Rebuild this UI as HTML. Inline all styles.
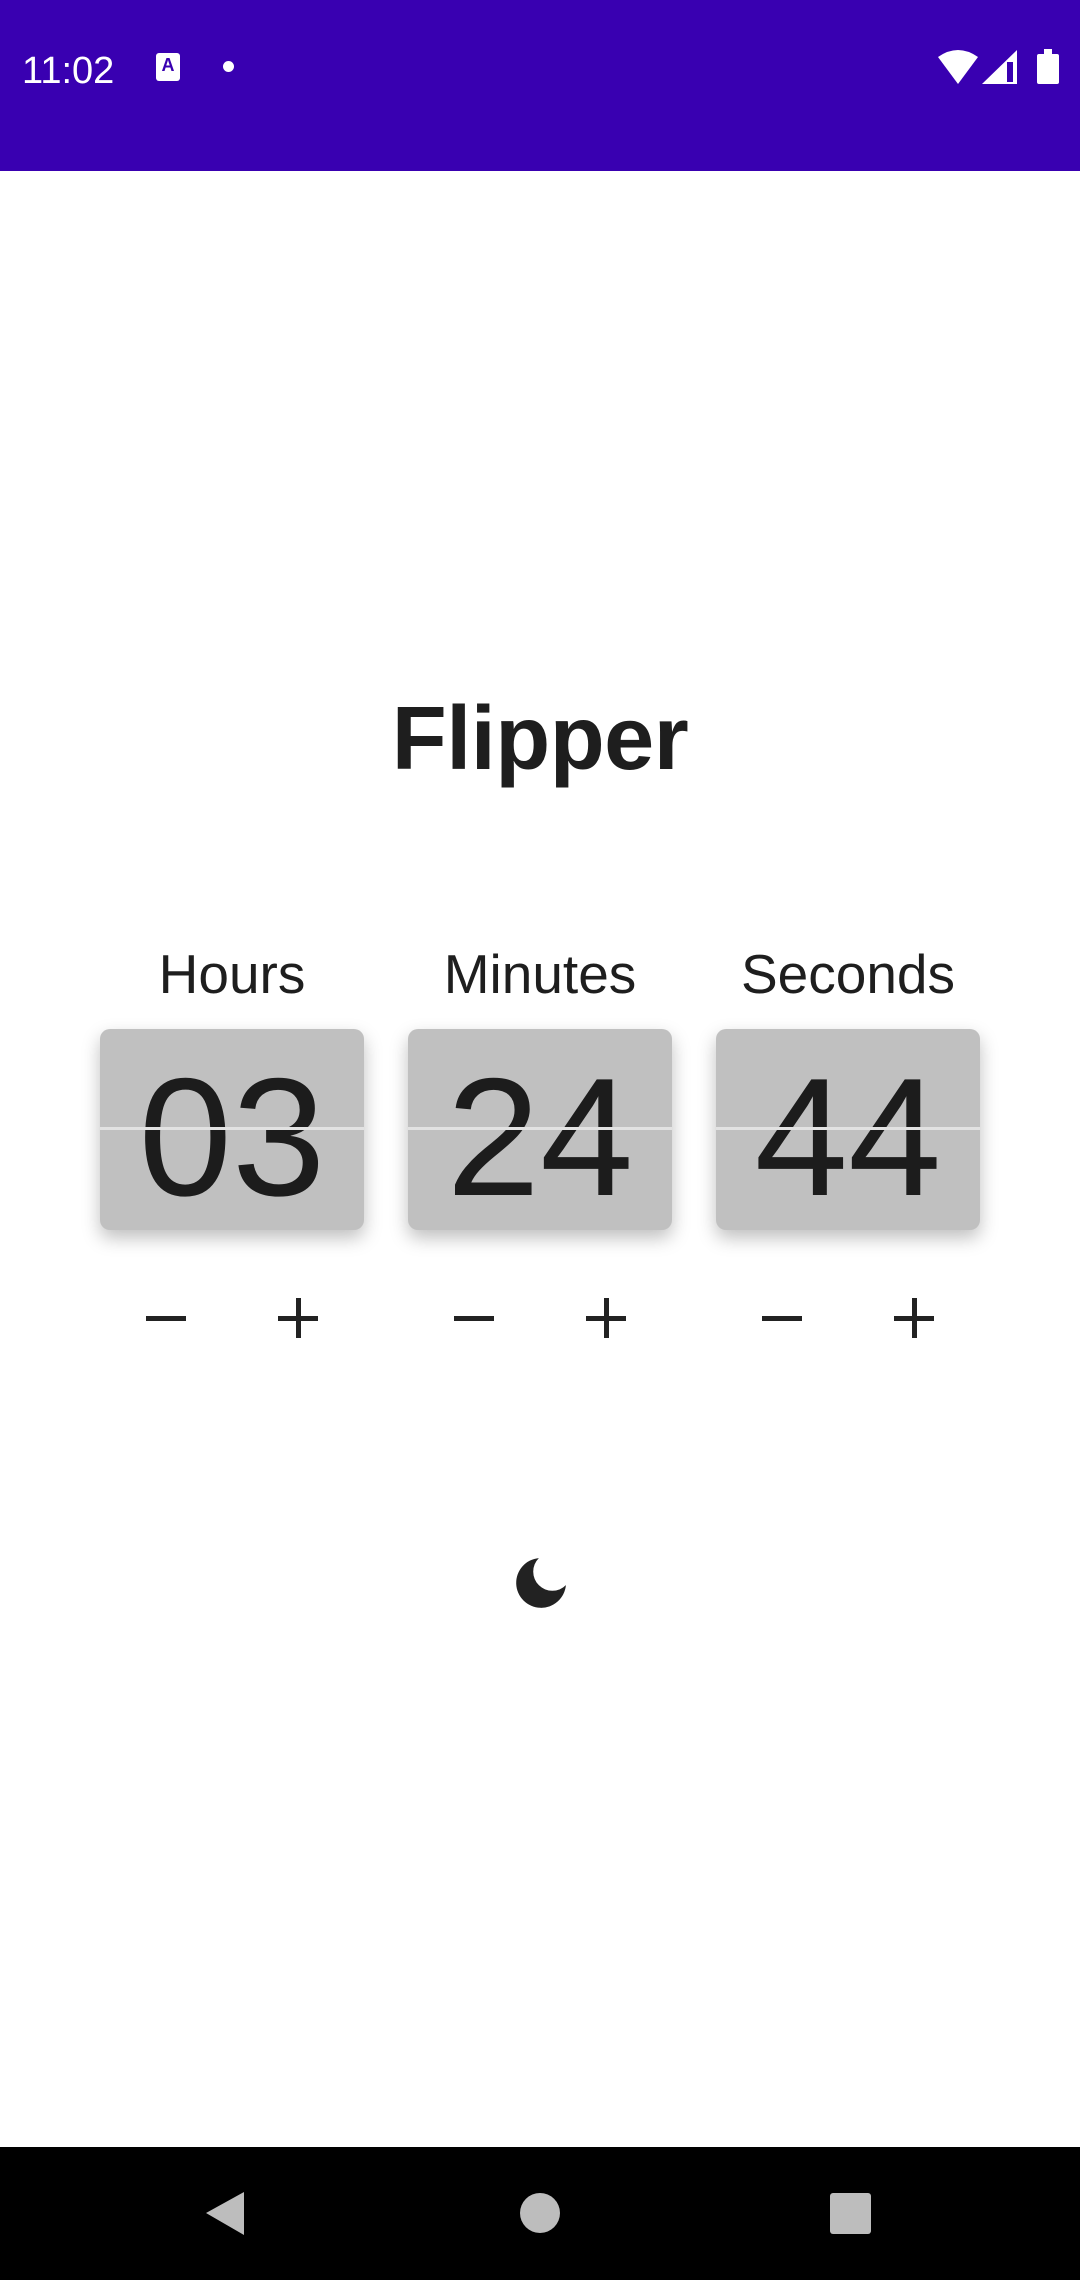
<!DOCTYPE html>
<html><head><meta charset="utf-8"><style>
body{margin:0;width:1080px;height:2280px;background:#fff;position:relative;overflow:hidden;font-family:"Liberation Sans",sans-serif;color:#1e1e1e}
.sb{position:absolute;left:0;top:0;width:1080px;height:171px;background:#3900b1}
.abs{position:absolute}
.title{position:absolute;left:0;width:1080px;text-align:center;top:688px;font-size:90px;font-weight:bold;letter-spacing:-0.5px}
.lbl{position:absolute;width:308px;text-align:center;top:942px;font-size:55px}
.card{position:absolute;top:1029px;width:264px;height:201px;background:#c0c0c0;border-radius:10px;box-shadow:0 8px 18px rgba(0,0,0,0.25);overflow:hidden}
.num{position:absolute;left:0;width:264px;text-align:center;top:24px;font-size:168px;line-height:168px;color:#1c1c1c}
.ln{position:absolute;left:0;top:98px;width:264px;height:3px;background:#e2e2e2}
.mn{position:absolute;width:40px;height:5px;background:#222;top:1316px}
.pl{position:absolute;width:40px;height:40px;top:1298px}
.pl:before{content:"";position:absolute;left:0;top:18px;width:40px;height:5px;background:#222}
.pl:after{content:"";position:absolute;left:18px;top:0;width:5px;height:40px;background:#222}
.nav{position:absolute;left:0;top:2147px;width:1080px;height:133px;background:#000}
</style></head><body>
<div class="sb"></div>
<div class="abs" style="left:22px;top:50px;font-size:38px;color:#fff">11:02</div>
<div class="abs" style="left:156px;top:53px;width:24px;height:28px;background:#fff;border-radius:3px;color:#3900b1;font-size:18px;font-weight:bold;text-align:center;line-height:24px">A</div>
<div class="abs" style="left:223px;top:61px;width:11px;height:11px;background:#fff;border-radius:50%"></div>
<svg class="abs" style="left:936px;top:49px" width="125" height="36">
<path d="M2 8 Q22 -6 42 8 L22 35 Z" fill="#fff"/>
<path d="M46 35 L81 1 L81 35 Z" fill="#fff"/>
<rect x="71" y="13" width="6" height="20" fill="#3900b1"/>
<rect x="101" y="5" width="22" height="30" rx="2" fill="#fff"/>
<rect x="108" y="0" width="8" height="6" fill="#fff"/>
</svg>
<div class="title">Flipper</div>
<div class="lbl" style="left:78px">Hours</div>
<div class="lbl" style="left:386px">Minutes</div>
<div class="lbl" style="left:694px">Seconds</div>
<div class="card" style="left:100px"><div class="num">03</div><div class="ln"></div></div>
<div class="card" style="left:408px"><div class="num">24</div><div class="ln"></div></div>
<div class="card" style="left:716px"><div class="num">44</div><div class="ln"></div></div>
<div class="mn" style="left:146px"></div><div class="pl" style="left:278px"></div>
<div class="mn" style="left:454px"></div><div class="pl" style="left:586px"></div>
<div class="mn" style="left:762px"></div><div class="pl" style="left:894px"></div>
<svg class="abs" style="left:515px;top:1557px" width="52" height="52" viewBox="0 0 24 24">
<path d="M11 0.5 A11.5 11.5 0 1 0 23.5 13 A7 7 0 0 1 11 0.5 Z" fill="#222"/>
</svg>
<div class="nav"></div>
<svg class="abs" style="left:0;top:2147px" width="1080" height="133">
<path d="M244 45 L244 88 L206 66 Z" fill="#bdbdbd"/>
<circle cx="540" cy="66" r="20" fill="#bdbdbd"/>
<rect x="830" y="46" width="41" height="41" rx="3" fill="#bdbdbd"/>
</svg>
</body></html>
